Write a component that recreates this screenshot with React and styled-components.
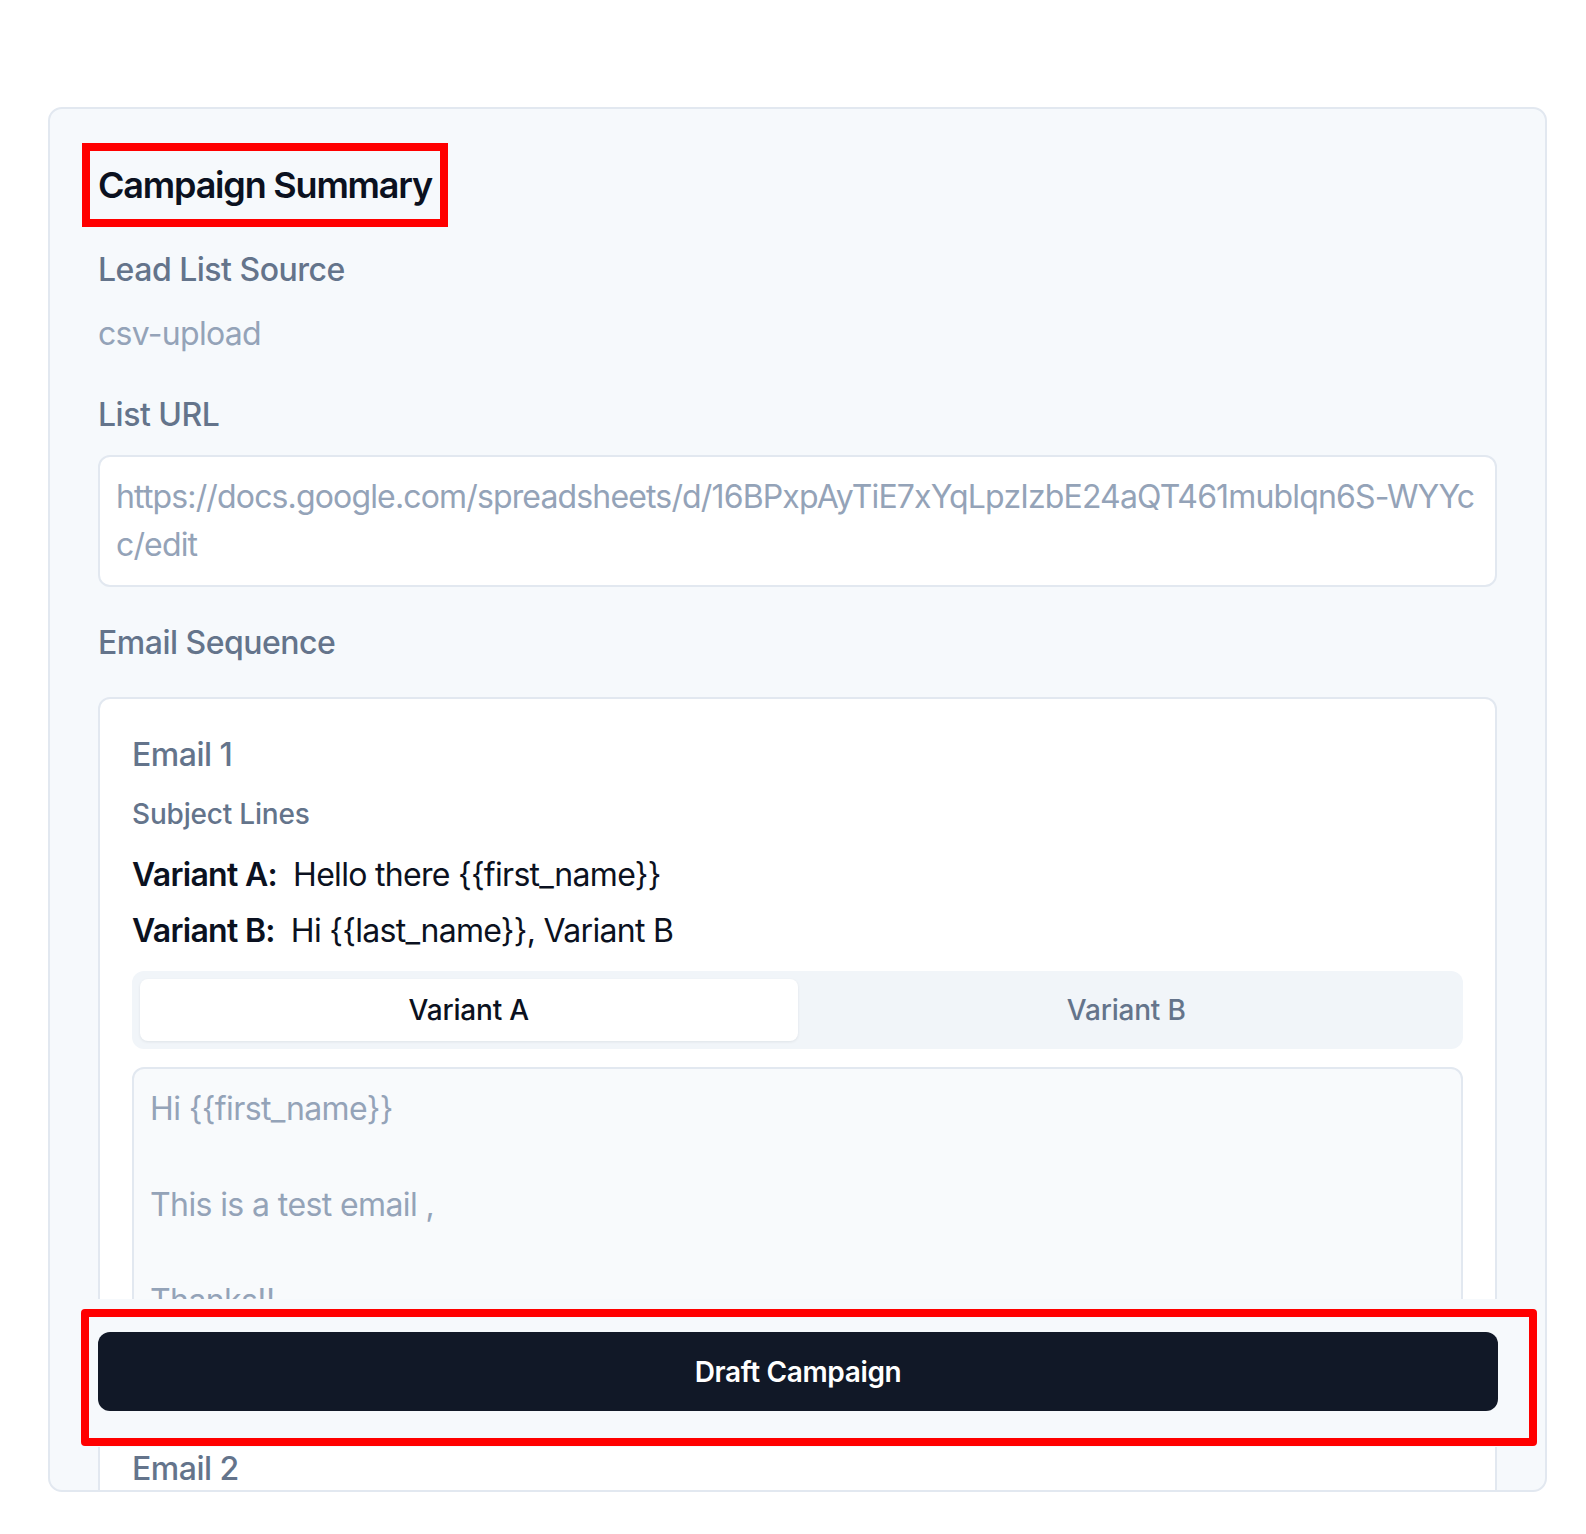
import React from 'react'
import styled, { createGlobalStyle } from 'styled-components'

const GlobalStyle = createGlobalStyle`
  * { box-sizing: border-box; }
  body {
    margin: 0;
    background: #ffffff;
    font-family: Inter, "Noto Sans", sans-serif;
    color: #0b1120;
  }
`;

const Page = styled.div`
  padding: 107px 39px 0 48px;
`;

const Card = styled.div`
  height: 1385px;
  overflow: hidden;
  background: #f6f9fc;
  border: 2px solid #e2e8f0;
  border-radius: 14px;
  padding: 50px 48px 0;
`;

const Content = styled.div`
  display: flex;
  flex-direction: column;
`;

const Title = styled.h2`
  align-self: flex-start;
  margin: 0 0 35px;
  font-size: 36px;
  line-height: 52px;
  font-weight: 600;
  letter-spacing: -1.2px;
  color: #0b1120;
  outline: 8px solid #ff0000;
  outline-offset: 8px;
`;

const Section = styled.section`
  display: flex;
  flex-direction: column;
  gap: ${p => p.$gap || '16px'};
  margin-bottom: ${p => p.$mb || '33px'};
`;

const Label = styled.div`
  font-size: 32px;
  line-height: 48px;
  font-weight: 500;
  letter-spacing: -0.5px;
  color: #64748b;
`;

const Value = styled.div`
  font-size: 32px;
  line-height: 48px;
  letter-spacing: -0.7px;
  color: #94a3b8;
`;

const Field = styled.div`
  background: ${p => p.$muted ? '#f8fafc' : '#ffffff'};
  border: 2px solid #e2e8f0;
  border-radius: 12px;
  padding: 16px;
  font-size: 32px;
  line-height: 48px;
  letter-spacing: ${p => p.$tight ? '-0.85px' : '-0.6px'};
  color: #94a3b8;
  white-space: pre-wrap;
  word-break: break-all;
  min-height: ${p => p.$minHeight || 'auto'};
`;

const EmailList = styled.div`
  background: #ffffff;
  border: 2px solid #e2e8f0;
  border-radius: 12px;
  padding: 32px;
  display: flex;
  flex-direction: column;
  gap: 48px;
`;

const Email = styled.div`
  display: flex;
  flex-direction: column;
`;

const EmailTitle = styled.div`
  font-size: 32px;
  line-height: 48px;
  font-weight: 500;
  letter-spacing: -0.5px;
  color: #64748b;
  margin-bottom: 15px;
`;

const SubTitle = styled.div`
  font-size: 28px;
  line-height: 40px;
  font-weight: 500;
  letter-spacing: -0.2px;
  color: #64748b;
  margin-bottom: 17px;
`;

const SubjectRow = styled.div`
  display: flex;
  font-size: 32px;
  line-height: 48px;
  letter-spacing: -0.7px;
  color: #0b1120;
  margin-bottom: ${p => p.$last ? '16px' : '8px'};
`;

const SubjectKey = styled.span`
  font-weight: 600;
  margin-right: 16px;
`;

const Tabs = styled.div`
  display: grid;
  grid-template-columns: 1fr 1fr;
  background: #f1f5f9;
  border-radius: 12px;
  padding: 8px;
  margin-bottom: 18px;
`;

const Tab = styled.div`
  height: 62px;
  display: flex;
  align-items: center;
  justify-content: center;
  border-radius: 8px;
  font-size: 28px;
  font-weight: 500;
  letter-spacing: -0.2px;
  color: ${p => p.$active ? '#0b1120' : '#64748b'};
  background: ${p => p.$active ? '#ffffff' : 'transparent'};
  box-shadow: ${p => p.$active ? '0 1px 3px rgba(15, 23, 42, 0.08)' : 'none'};
`;

const Footer = styled.div`
  position: sticky;
  bottom: 43px;
  background: #f6f9fc;
  padding: 10px 0 1px;
`;

const Highlight = styled.div`
  margin: 0 -40px 0 -17px;
  border: 8px solid #ff0000;
  border-radius: 4px;
  padding: 15px 31px 27px 9px;
`;

const Button = styled.button`
  width: 100%;
  height: 79px;
  border: none;
  border-radius: 12px;
  background: #111827;
  color: #ffffff;
  font-family: inherit;
  font-size: 28px;
  font-weight: 600;
  letter-spacing: -0.35px;
`;

const emails = [
  {
    title: 'Email 1',
    a: 'Hello there {{first_name}}',
    b: 'Hi {{last_name}}, Variant B',
    body: 'Hi {{first_name}}\n\nThis is a test email ,\n\nThanks!!',
  },
  {
    title: 'Email 2',
    a: 'Following up, {{first_name}}',
    b: 'Quick question {{first_name}}',
    body: 'Hi {{first_name}}\n\nJust following up on my last email.\n\nThanks!!',
  },
];

export default function App() {
  return (
    <>
      <GlobalStyle />
      <Page>
        <Card>
          <Content>
            <Title>Campaign Summary</Title>
            <Section>
              <Label>Lead List Source</Label>
              <Value>csv-upload</Value>
            </Section>
            <Section $mb="32px">
              <Label>List URL</Label>
              <Field $tight>https://docs.google.com/spreadsheets/d/16BPxpAyTiE7xYqLpzIzbE24aQT461mublqn6S-WYYcc/edit</Field>
            </Section>
            <Section $mb="32px" $gap="30px">
              <Label>Email Sequence</Label>
              <EmailList>
                {emails.map(e => (
                  <Email key={e.title}>
                    <EmailTitle>{e.title}</EmailTitle>
                    <SubTitle>Subject Lines</SubTitle>
                    <SubjectRow>
                      <SubjectKey>Variant A:</SubjectKey>
                      <span>{e.a}</span>
                    </SubjectRow>
                    <SubjectRow $last>
                      <SubjectKey>Variant B:</SubjectKey>
                      <span>{e.b}</span>
                    </SubjectRow>
                    <Tabs>
                      <Tab $active>Variant A</Tab>
                      <Tab>Variant B</Tab>
                    </Tabs>
                    <Field $muted $minHeight="330px">{e.body}</Field>
                  </Email>
                ))}
              </EmailList>
            </Section>
            <Footer>
              <Highlight>
                <Button>Draft Campaign</Button>
              </Highlight>
            </Footer>
          </Content>
        </Card>
      </Page>
    </>
  )
}
